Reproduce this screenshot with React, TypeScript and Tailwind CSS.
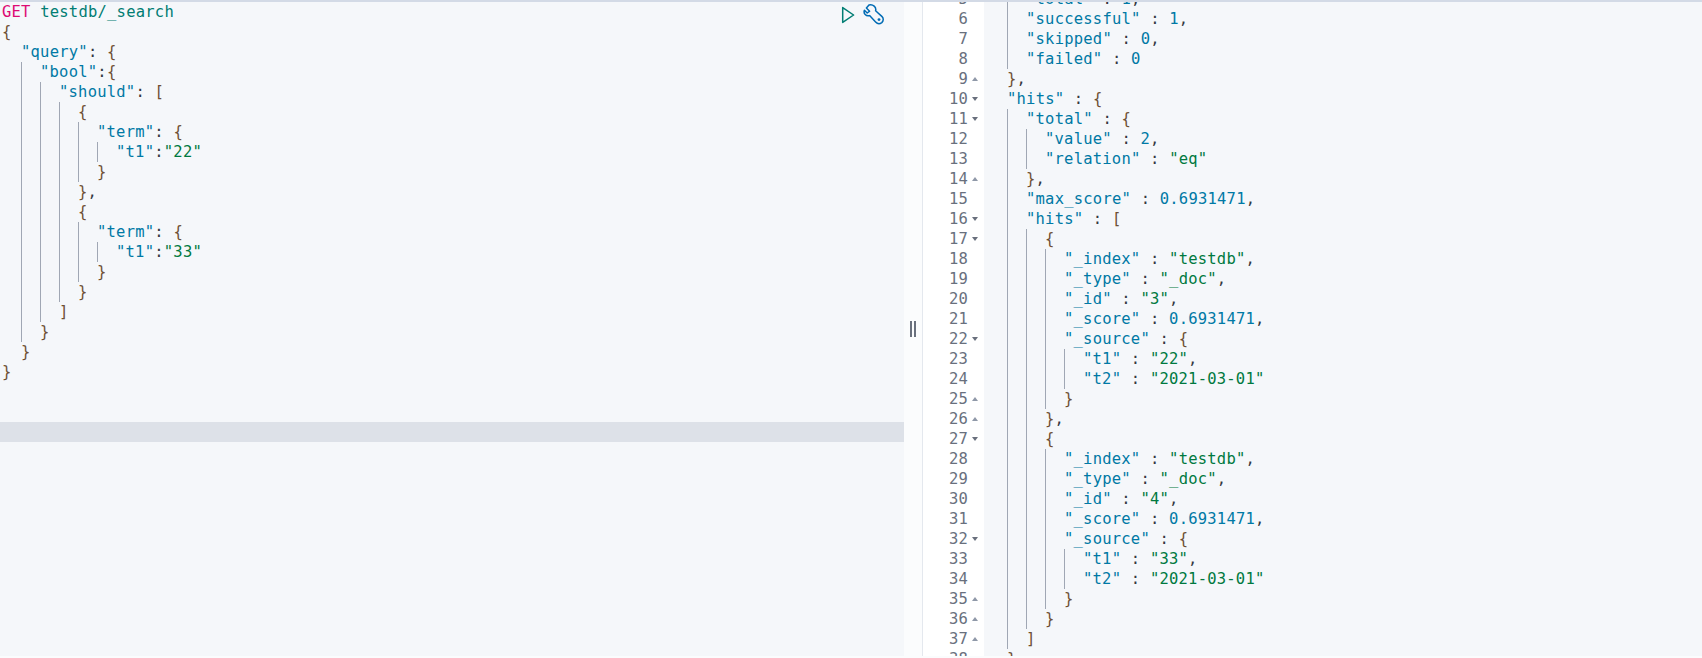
const requestLines = [
  '  "query": {',
  '    "bool":{',
  '      "should": [',
  "        {",
  '          "term": {',
  '            "t1":"22"',
  "          }",
  "        },",
  "        {",
  '          "term": {',
  '            "t1":"33"',
  "          }",
  "        }",
  "      ]",
  "    }",
  "  }",
  "}",
];

const responseLines: [number, string, ("up" | "down")?][] = [
  [5, '    "total" : 1,'],
  [6, '    "successful" : 1,'],
  [7, '    "skipped" : 0,'],
  [8, '    "failed" : 0'],
  [9, "  },", "up"],
  [10, '  "hits" : {', "down"],
  [11, '    "total" : {', "down"],
  [12, '      "value" : 2,'],
  [13, '      "relation" : "eq"'],
  [14, "    },", "up"],
  [15, '    "max_score" : 0.6931471,'],
  [16, '    "hits" : [', "down"],
  [17, "      {", "down"],
  [18, '        "_index" : "testdb",'],
  [19, '        "_type" : "_doc",'],
  [20, '        "_id" : "3",'],
  [21, '        "_score" : 0.6931471,'],
  [22, '        "_source" : {', "down"],
  [23, '          "t1" : "22",'],
  [24, '          "t2" : "2021-03-01"'],
  [25, "        }", "up"],
  [26, "      },", "up"],
  [27, "      {", "down"],
  [28, '        "_index" : "testdb",'],
  [29, '        "_type" : "_doc",'],
  [30, '        "_id" : "4",'],
  [31, '        "_score" : 0.6931471,'],
  [32, '        "_source" : {', "down"],
  [33, '          "t1" : "33",'],
  [34, '          "t2" : "2021-03-01"'],
  [35, "        }", "up"],
  [36, "      }", "up"],
  [37, "    ]", "up"],
  [38, "  }", "up"],
];

const mono = "font-['DejaVu_Sans_Mono',monospace] text-[15.5px] tracking-[0.22px] leading-5";

function Tokens({ text }: { text: string }) {
  const parts = text.match(/"[^"]*"|[{}\[\]]|[\d.]+|[^"{}\[\]\d]+/g) ?? [];
  return (
    <>
      {parts.map((part, i) => {
        let color = "text-[#343741]";
        if (part.startsWith('"')) {
          const isKey = /^\s*:/.test(parts[i + 1] ?? "");
          color = isKey ? "text-[#0079a5]" : "text-[#00793f]";
        } else if (/^[{}\[\]]$/.test(part)) {
          color = "text-[#6e5034]";
        } else if (/^[\d.]+$/.test(part)) {
          color = "text-[#0079a5]";
        }
        return (
          <span key={i} className={color}>
            {part}
          </span>
        );
      })}
    </>
  );
}

function CodeLine({ text }: { text: string }) {
  const body = text.trimStart();
  const levels = (text.length - body.length) / 2;
  return (
    <div className={`flex h-5 whitespace-pre ${mono}`}>
      {Array.from({ length: levels }).map((_, i) => (
        <span key={i} className={i === 0 ? "h-5 w-[19px] shrink-0" : "h-5 w-[19px] shrink-0 border-l border-[#a0a7b4]"} />
      ))}
      <span>
        <Tokens text={body} />
      </span>
    </div>
  );
}

function ToolIcons() {
  return (
    <div className="absolute right-[19px] top-[2px] flex items-start gap-[8px]">
      <svg width="14" height="18" viewBox="0 0 14 18" className="mt-[2px]" fill="none">
        <path d="M1.7 1.6 L12.6 9 L1.7 16.4 Z" stroke="#017d73" strokeWidth="1.5" strokeLinejoin="round" />
      </svg>
      <svg width="22" height="21" viewBox="0 0 22 21" fill="none" stroke="#006bb4" strokeWidth="1.5" strokeLinejoin="round">
        <path d="M6 1 L3.4 4 L6.6 7.2 L4.2 9 L1.4 6.2 C0.2 9.6 3 12.6 6.6 11.6 L12.6 18 C14.4 20 17 20 18.8 18.6 C20.8 16.6 20.6 14 18.8 12.4 L12.6 6.8 C13.6 3 10 0 6 1 Z" />
        <circle cx="16" cy="15.6" r="1.4" fill="#006bb4" stroke="none" />
      </svg>
    </div>
  );
}

export default function App() {
  return (
    <div className="flex h-[658px] w-[1702px] flex-col overflow-hidden bg-[#fbfcfd]">
      <div className="h-[2px] shrink-0 bg-[#d3dae6]" />
      <div className="flex min-h-0 flex-1">
        <div className="relative w-[904px] shrink-0 overflow-hidden bg-[#f5f7fa] pl-[2px]">
          <div className={`h-5 whitespace-pre ${mono}`}>
            <span className="text-[#dd0a73]">GET</span>
            <span className="text-[#017d73]"> testdb/_search</span>
          </div>
          <CodeLine text="{" />
          {requestLines.map((line, i) => (
            <CodeLine key={i} text={line} />
          ))}
          <div className="-ml-[2px] mt-[40px] h-5 bg-[#dde1e8]" />
          <ToolIcons />
        </div>

        <div className="flex w-[18px] shrink-0 items-center justify-center gap-[2px]">
          <span className="h-4 w-[2px] bg-[#69707d]" />
          <span className="h-4 w-[2px] bg-[#69707d]" />
        </div>

        <div className="flex min-w-0 flex-1 overflow-hidden border-l border-[#e4e8ee] bg-[#f5f7fa]">
          <div className="-mt-[13px] w-[61px] shrink-0 self-start">
            {responseLines.map(([n, , fold]) => (
              <div key={n} className={`flex h-5 items-center justify-end bg-white text-[#69707d] ${mono}`}>
                <span>{n}</span>
                <span className="flex w-4 shrink-0 justify-start pl-1">
                  {fold === "up" && <span className="h-0 w-0 border-x-[3px] border-b-[4px] border-x-transparent border-b-[#8f98a8]" />}
                  {fold === "down" && <span className="h-0 w-0 border-x-[3px] border-t-[4px] border-x-transparent border-t-[#69707d]" />}
                </span>
              </div>
            ))}
          </div>
          <div className="-mt-[13px] min-w-0 flex-1 pl-1">
            {responseLines.map(([n, text]) => (
              <CodeLine key={n} text={text} />
            ))}
          </div>
        </div>
      </div>
      <div className="h-[2px] shrink-0 bg-[#fbfcfd]" />
    </div>
  );
}
